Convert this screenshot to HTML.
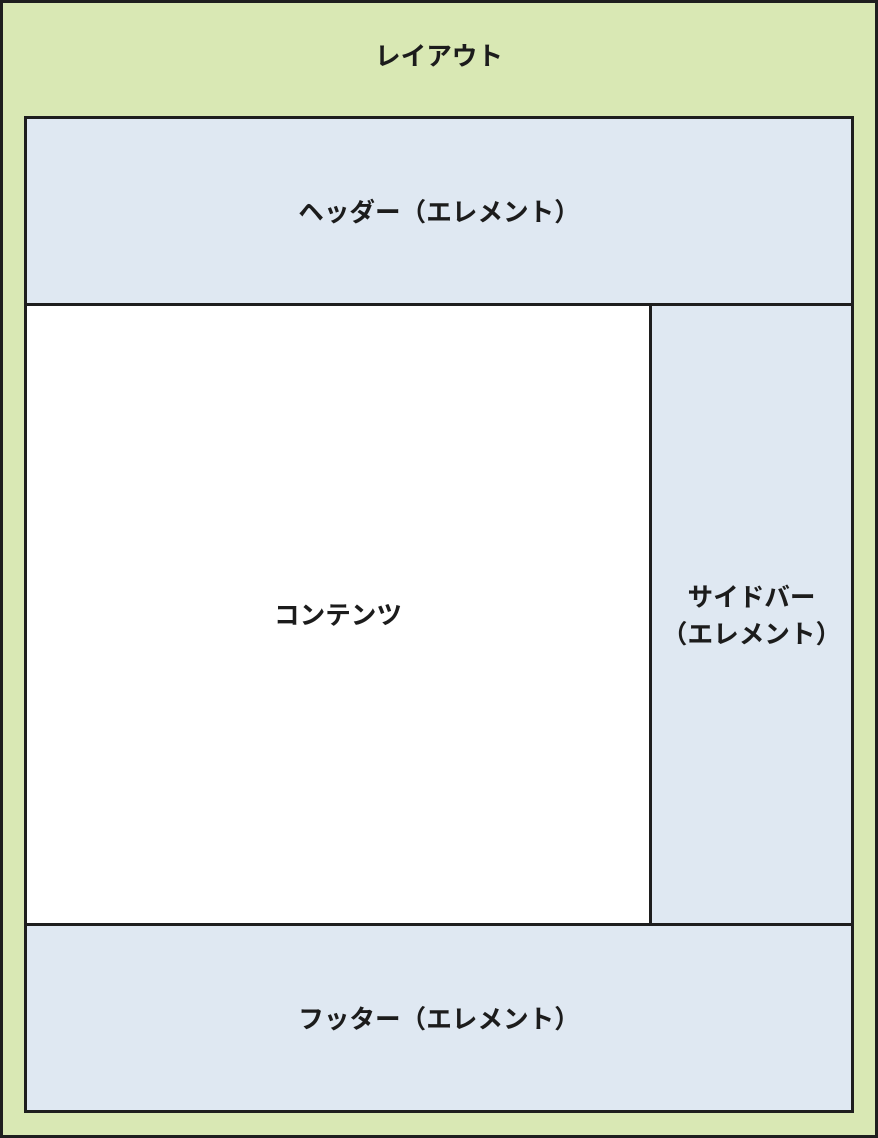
<!DOCTYPE html>
<html><head><meta charset="utf-8"><style>
html,body{margin:0;padding:0}
body{width:878px;height:1138px;position:relative;overflow:hidden;font-family:"Liberation Sans","Noto Sans CJK JP",sans-serif;font-weight:bold;color:#1c1c1c}
.b{position:absolute;box-sizing:border-box;border:3px solid #1e1e1e;display:flex;align-items:center;justify-content:center;text-align:center;font-size:25.6px;line-height:37px;padding-top:4px}
</style></head><body>
<div class="b" style="left:0;top:0;width:878px;height:1138px;background:#d9e8b4;align-items:flex-start;padding-top:0"><div style="margin-top:36px">レイアウト</div></div>
<div class="b" style="left:24px;top:116px;width:830px;height:190px;background:#dfe8f2">ヘッダー（エレメント）</div>
<div class="b" style="left:24px;top:303px;width:628px;height:623px;background:#fff">コンテンツ</div>
<div class="b" style="left:649px;top:303px;width:205px;height:623px;background:#dfe8f2">サイドバー<br>（エレメント）</div>
<div class="b" style="left:24px;top:923px;width:830px;height:190px;background:#dfe8f2">フッター（エレメント）</div>
</body></html>
